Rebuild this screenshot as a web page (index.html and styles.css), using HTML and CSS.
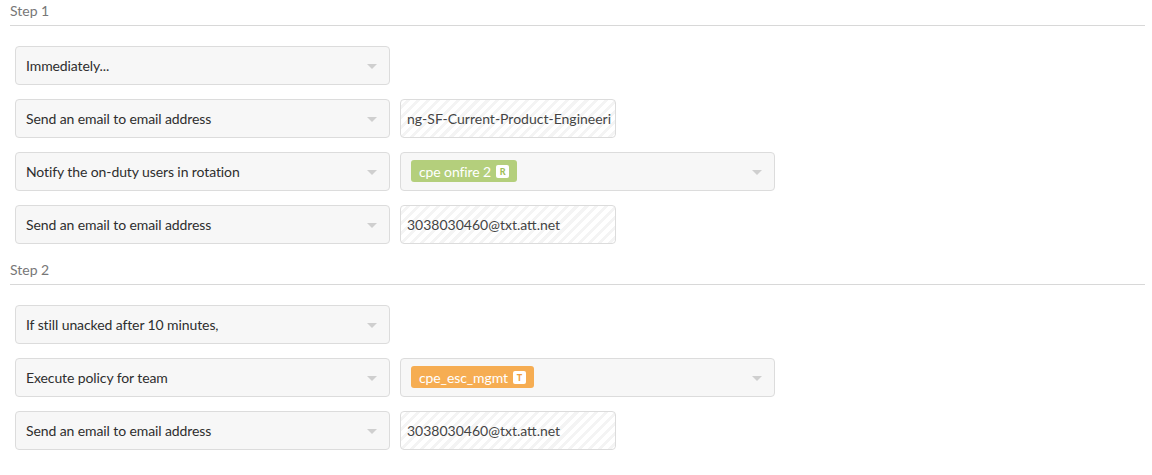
FILE: index.html
```html
<!DOCTYPE html>
<html>
<head>
<meta charset="utf-8">
<link rel="stylesheet" href="styles.css">
</head>
<body>
<div class="page">
  <section class="step">
    <div class="step-title">Step 1</div>
    <div class="rows">
      <div class="row">
        <div class="select"><span>Immediately...</span><i class="caret"></i></div>
      </div>
      <div class="row">
        <div class="select"><span>Send an email to email address</span><i class="caret"></i></div>
        <div class="input"><span>ng-SF-Current-Product-Engineeri</span></div>
      </div>
      <div class="row">
        <div class="select"><span>Notify the on-duty users in rotation</span><i class="caret"></i></div>
        <div class="select wide"><span class="tag green">cpe onfire 2<b class="badge">R</b></span><i class="caret"></i></div>
      </div>
      <div class="row">
        <div class="select"><span>Send an email to email address</span><i class="caret"></i></div>
        <div class="input"><span>3038030460@txt.att.net</span></div>
      </div>
    </div>
  </section>
  <section class="step second">
    <div class="step-title">Step 2</div>
    <div class="rows">
      <div class="row">
        <div class="select"><span>If still unacked after 10 minutes,</span><i class="caret"></i></div>
      </div>
      <div class="row">
        <div class="select"><span>Execute policy for team</span><i class="caret"></i></div>
        <div class="select wide"><span class="tag orange">cpe_esc_mgmt<b class="badge">T</b></span><i class="caret"></i></div>
      </div>
      <div class="row">
        <div class="select"><span>Send an email to email address</span><i class="caret"></i></div>
        <div class="input"><span>3038030460@txt.att.net</span></div>
      </div>
    </div>
  </section>
</div>
</body>
</html>
```

FILE: styles.css
```css
* { box-sizing: border-box; }
html, body { margin: 0; padding: 0; background: #fff; }
body { font-family: Lato, "Open Sans", sans-serif; color: #2e2e2e; }

.page { padding: 0 7px 0 10px; }

.step.second { margin-top: 15px; }

.step-title {
  font-size: 14px;
  line-height: 20px;
  height: 26px;
  padding-top: 1px;
  padding-bottom: 4px;
  color: #777;
  border-bottom: 1px solid #d8d8d8;
}

.rows {
  margin-top: 20px;
  padding-left: 5px;
  display: flex;
  flex-direction: column;
  gap: 14px;
}

.row { display: flex; gap: 10px; }

.select {
  width: 375px;
  height: 39px;
  border: 1px solid #dcdcdc;
  border-radius: 4px;
  background: #f7f7f7;
  display: flex;
  align-items: center;
  justify-content: space-between;
  padding: 0 12px 1px 10px;
  font-size: 14px;
  letter-spacing: -0.1px;
}

.caret {
  width: 0;
  height: 0;
  border-left: 5px solid transparent;
  border-right: 5px solid transparent;
  border-top: 5px solid #cfcfcf;
  margin-top: 3px;
}

.input {
  width: 216px;
  height: 39px;
  border: 1px solid #dcdcdc;
  border-radius: 4px;
  background: repeating-linear-gradient(135deg, #fff 0 4px, #f4f4f4 4px 7px);
  display: flex;
  align-items: center;
  padding: 0 6px 1px;
  font-size: 14px;
  color: #444;
  overflow: hidden;
  white-space: nowrap;
}

.tag {
  display: inline-flex;
  align-items: center;
  height: 22px;
  border-radius: 3px;
  padding: 0 8px 0 8px;
  color: #fff;
  font-size: 14px;
  letter-spacing: -0.1px;
}
.tag.green { background: #b4cf7c; }
.tag.orange { background: #f6ad52; }

.badge {
  display: inline-flex;
  align-items: center;
  justify-content: center;
  width: 13px;
  height: 13px;
  margin-left: 5px;
  background: #fff;
  border-radius: 2px;
  font-size: 9px;
  font-weight: 900;
  letter-spacing: 0;
}
.green .badge { color: #9fbf5a; }
.orange .badge { color: #f0a040; }
```
